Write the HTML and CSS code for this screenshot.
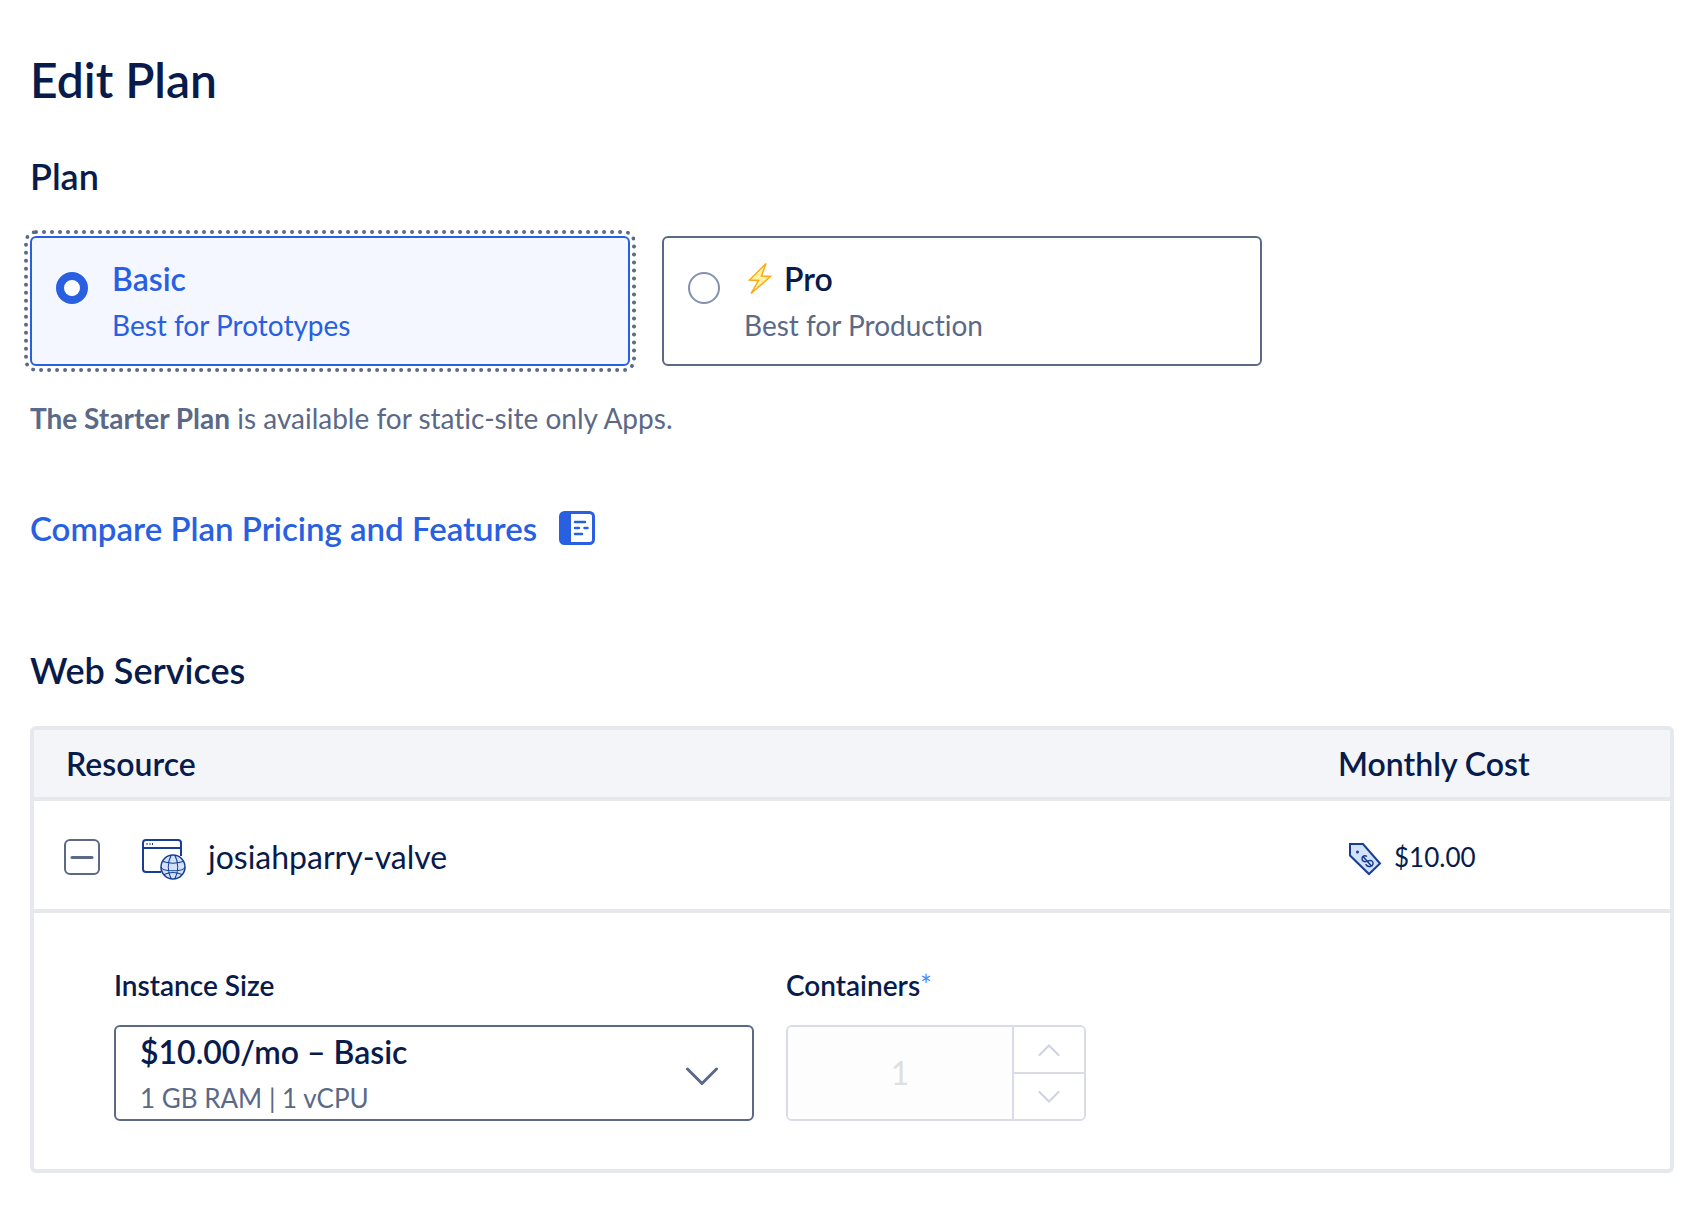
FILE: index.html
```html
<!DOCTYPE html>
<html lang="en">
<head>
<meta charset="utf-8">
<meta name="viewport" content="width=device-width, initial-scale=1">
<title>Edit Plan</title>
<link rel="stylesheet" href="styles.css">
</head>
<body>
<main class="page">
  <h1 class="title">Edit Plan</h1>

  <section>
    <h2 class="heading" id="plan-heading">Plan</h2>
    <div class="plans" role="radiogroup" aria-labelledby="plan-heading">
      <label class="plan plan-selected">
        <input class="radio" type="radio" name="plan" value="basic" checked>
        <span class="plan-text">
          <span class="plan-name">Basic</span>
          <span class="plan-note">Best for Prototypes</span>
        </span>
      </label>
      <label class="plan">
        <input class="radio" type="radio" name="plan" value="pro">
        <span class="plan-text">
          <span class="plan-name">
            <svg class="bolt" viewBox="0 0 32 36" aria-hidden="true">
              <path d="M22 2.500 L5.500 19 L14.500 19.500 L7 32.500 L26.500 15.500 L17.500 15 Z" fill="#fff3a0" stroke="#fba919" stroke-width="1.500" stroke-linejoin="miter"/>
            </svg>
            Pro
          </span>
          <span class="plan-note">Best for Production</span>
        </span>
      </label>
    </div>
    <p class="hint"><strong>The Starter Plan</strong> is available for static-site only Apps.</p>
    <a class="compare" href="#compare">
      Compare Plan Pricing and Features
      <svg class="compare-icon" viewBox="0 0 36 34" aria-hidden="true">
        <rect x="1.500" y="1.500" width="33" height="31" rx="4" fill="none" stroke="currentColor" stroke-width="3"/>
        <path d="M2 2h10v30H2z" fill="currentColor"/>
        <path d="M16 11h10M16 17h4M25.500 17h3M16 23h7" stroke="currentColor" stroke-width="2.500" stroke-linecap="round"/>
      </svg>
    </a>
  </section>

  <section>
    <h2 class="heading services-heading">Web Services</h2>
    <table class="services">
      <thead>
        <tr><th scope="col">Resource</th><th class="cost-col" scope="col">Monthly Cost</th></tr>
      </thead>
      <tbody>
        <tr>
          <td class="resource-cell">
            <div class="resource">
              <button class="toggle" type="button" aria-label="Collapse josiahparry-valve" aria-expanded="true">
                <svg viewBox="0 0 32 32" aria-hidden="true"><path d="M6 16.500h20" stroke="currentColor" stroke-width="3" stroke-linecap="round"/></svg>
              </button>
              <svg class="service-icon" viewBox="0 -6 44 48" aria-hidden="true">
                <path d="M19 33H4a3 3 0 0 1-3-3V4a3 3 0 0 1 3-3h32a3 3 0 0 1 3 3v13" fill="none" stroke="#153e94" stroke-width="2"/>
                <path d="M1 9h38" stroke="#153e94" stroke-width="2"/>
                <path d="M4.500 5h1M7.500 5h1M10 5h1" stroke="#153e94" stroke-width="2"/>
                <circle cx="31" cy="28" r="12" fill="#d3e1fb" stroke="#153e94" stroke-width="1.500"/>
                <path d="M29 16.500c-3.500 7-3.500 16 0 23M33 16.500c3.500 7 3.500 16 0 23M21 22.500q10 3.500 20 0M19 28c1 5 23 5 24 0M22 35.500q9-4 18 0" fill="none" stroke="#153e94" stroke-width="1.200"/>
              </svg>
              <span class="resource-name">josiahparry-valve</span>
            </div>
          </td>
          <td>
            <div class="cost">
              <svg class="tag" viewBox="0 -4 44 40" aria-hidden="true">
                <path d="M12 3h13l17 19.500L31 33 12 14.500Z" fill="#d3e1fb" stroke="#153e94" stroke-width="2"/>
                <circle cx="19.500" cy="11" r="1.500" fill="#153e94"/>
                <path d="M29 15.500c-2-1.500-5-.5-5 2s2 3.500 4 3 4-2 6-.5 1 5-1.500 5.500-4.500-1-4.500-2.500M24.500 15l9 10" fill="none" stroke="#153e94" stroke-width="1.500"/>
              </svg>
              <span>$10.00</span>
            </div>
          </td>
        </tr>
        <tr>
          <td class="details" colspan="2">
            <div class="fields">
              <div class="field size-field">
                <label class="label" for="size">Instance Size</label>
                <div class="picker">
                  <select class="select" id="size" aria-describedby="size-spec">
                    <option>$10.00/mo – Basic</option>
                  </select>
                  <span class="spec" id="size-spec">1 GB RAM | 1 vCPU</span>
                  <svg class="chevron" viewBox="0 0 32 20" aria-hidden="true"><path d="M1.500 2 16 16.500 30.500 2" fill="none" stroke="currentColor" stroke-width="3" stroke-linecap="round" stroke-linejoin="round"/></svg>
                </div>
              </div>
              <div class="field count-field">
                <label class="label" for="containers">Containers<span class="required">*</span></label>
                <div class="stepper">
                  <input class="count" id="containers" type="text" inputmode="numeric" value="1" disabled>
                  <div class="steps">
                    <button class="step" type="button" aria-label="Add a container" disabled>
                      <svg viewBox="0 0 22 12" aria-hidden="true"><path d="M1.500 11 11 1.500 20.500 11"/></svg>
                    </button>
                    <button class="step" type="button" aria-label="Remove a container" disabled>
                      <svg viewBox="0 0 22 12" aria-hidden="true"><path d="M1.500 1 11 10.500 20.500 1"/></svg>
                    </button>
                  </div>
                </div>
              </div>
            </div>
          </td>
        </tr>
      </tbody>
    </table>
  </section>
</main>
</body>
</html>
```
FILE: styles.css
```css
:root {
  --navy: #081b4b;
  --blue: #2860e1;
  --slate: #5b6987;
  --line: #e5e8ed;
  --pale: #d9dce6;
}

* { box-sizing: border-box; }

body {
  margin: 0;
  background: #fff;
  color: var(--navy);
  font-family: Lato, "Liberation Sans", sans-serif;
  font-size: 28px;
  line-height: 40px;
  font-variant-ligatures: none;
}

button, input, select { font: inherit; }

.page { padding: 52px 34px 38px 30px; }

.title {
  margin: 0 0 44px;
  font-size: 48px;
  line-height: 56px;
  font-weight: 600;
}

.heading {
  margin: 0 0 36px;
  font-size: 36px;
  line-height: 48px;
  font-weight: 600;
}

.services-heading { margin-bottom: 32px; }

.plans {
  display: grid;
  grid-template-columns: 1fr 1fr;
  gap: 32px;
  max-width: 1232px;
}

.plan {
  display: flex;
  gap: 24px;
  padding: 20px 24px 18px;
  border: 2px solid var(--slate);
  border-radius: 6px;
  cursor: pointer;
}

.plan-selected {
  border-color: var(--blue);
  background: #f4f7ff;
  color: var(--blue);
  outline: 4px dotted var(--slate);
  outline-offset: 2px;
}

.radio {
  appearance: none;
  flex: none;
  width: 32px;
  height: 32px;
  margin: 14px 0 0;
  border: 2px solid #8390b0;
  border-radius: 50%;
  background: #fff;
}

.radio:checked { border: 8px solid var(--blue); }

.plan-text { display: flex; flex-direction: column; gap: 4px; }

.plan-name {
  display: flex;
  align-items: center;
  gap: 8px;
  font-size: 32px;
  line-height: 42px;
  font-weight: 600;
}

.plan-note { line-height: 42px; color: var(--slate); }
.plan-selected .plan-note { color: inherit; }

.bolt { width: 32px; height: 36px; }

.hint { margin: 32px 0 66px; color: var(--slate); }
.hint strong { font-weight: 700; }

.compare {
  display: inline-flex;
  align-items: center;
  gap: 22px;
  margin-bottom: 94px;
  color: var(--blue);
  font-size: 33px;
  line-height: 48px;
  font-weight: 600;
  text-decoration: none;
}

.compare-icon { width: 36px; height: 34px; }

.services {
  width: 100%;
  border: 4px solid var(--line);
  border-radius: 6px;
  border-spacing: 0;
}

.services th {
  height: 71px;
  padding: 0 32px;
  border-bottom: 4px solid var(--line);
  background: #f3f5f9;
  font-size: 32px;
  font-weight: 600;
  text-align: left;
}

.cost-col { width: 364px; }

.services td {
  height: 112px;
  padding: 4px 32px 0;
  border-bottom: 4px solid var(--line);
}

.services .resource-cell { padding-left: 30px; }

.resource { display: flex; align-items: center; }

.toggle {
  width: 36px;
  height: 36px;
  margin-right: 42px;
  padding: 0;
  border: 2px solid var(--slate);
  border-radius: 6px;
  background: none;
  color: var(--slate);
}

.toggle svg { display: block; }

.service-icon { width: 44px; height: 48px; margin-right: 22px; }

.resource-name { font-size: 32px; }

.cost { display: flex; align-items: center; gap: 12px; font-size: 26px; }
.tag { width: 44px; height: 40px; }

.services .details {
  padding: 52px 80px 48px;
  border-bottom: 0;
}

.fields { display: flex; flex-wrap: wrap; gap: 32px; }

.field { display: flex; flex-direction: column; gap: 20px; }
.size-field { width: 640px; }
.count-field { width: 300px; }

.label { font-weight: 600; }
.required { color: #4a8cff; font-weight: 400; }

.picker { display: grid; }
.picker > * { grid-area: 1 / 1; }

.select {
  appearance: none;
  height: 96px;
  padding: 0 80px 42px 24px;
  border: 2px solid var(--slate);
  border-radius: 6px;
  background: #fff;
  color: var(--navy);
  font-size: 32px;
  font-weight: 600;
}

.spec {
  align-self: end;
  margin: 0 26px 3px;
  color: var(--slate);
  font-size: 26px;
  pointer-events: none;
}

.chevron {
  place-self: end;
  width: 32px;
  height: 20px;
  margin: 0 36px 34px 0;
  color: var(--slate);
  pointer-events: none;
}

.stepper {
  display: flex;
  height: 96px;
  border: 2px solid var(--pale);
  border-radius: 6px;
  overflow: hidden;
}

.count {
  flex: 1;
  min-width: 0;
  padding: 0;
  border: 0;
  background: #fdfdfd;
  color: #dfdfe1;
  font-size: 32px;
  text-align: center;
}

.steps {
  display: flex;
  flex-direction: column;
  width: 72px;
  border-left: 2px solid var(--pale);
}

.step {
  flex: 1;
  display: flex;
  align-items: center;
  justify-content: center;
  padding: 0;
  border: 0;
  background: #fff;
}

.step + .step { border-top: 2px solid var(--pale); }

.step svg {
  width: 22px;
  height: 12px;
  fill: none;
  stroke: #cdd2de;
  stroke-width: 2;
  stroke-linecap: round;
}
```
